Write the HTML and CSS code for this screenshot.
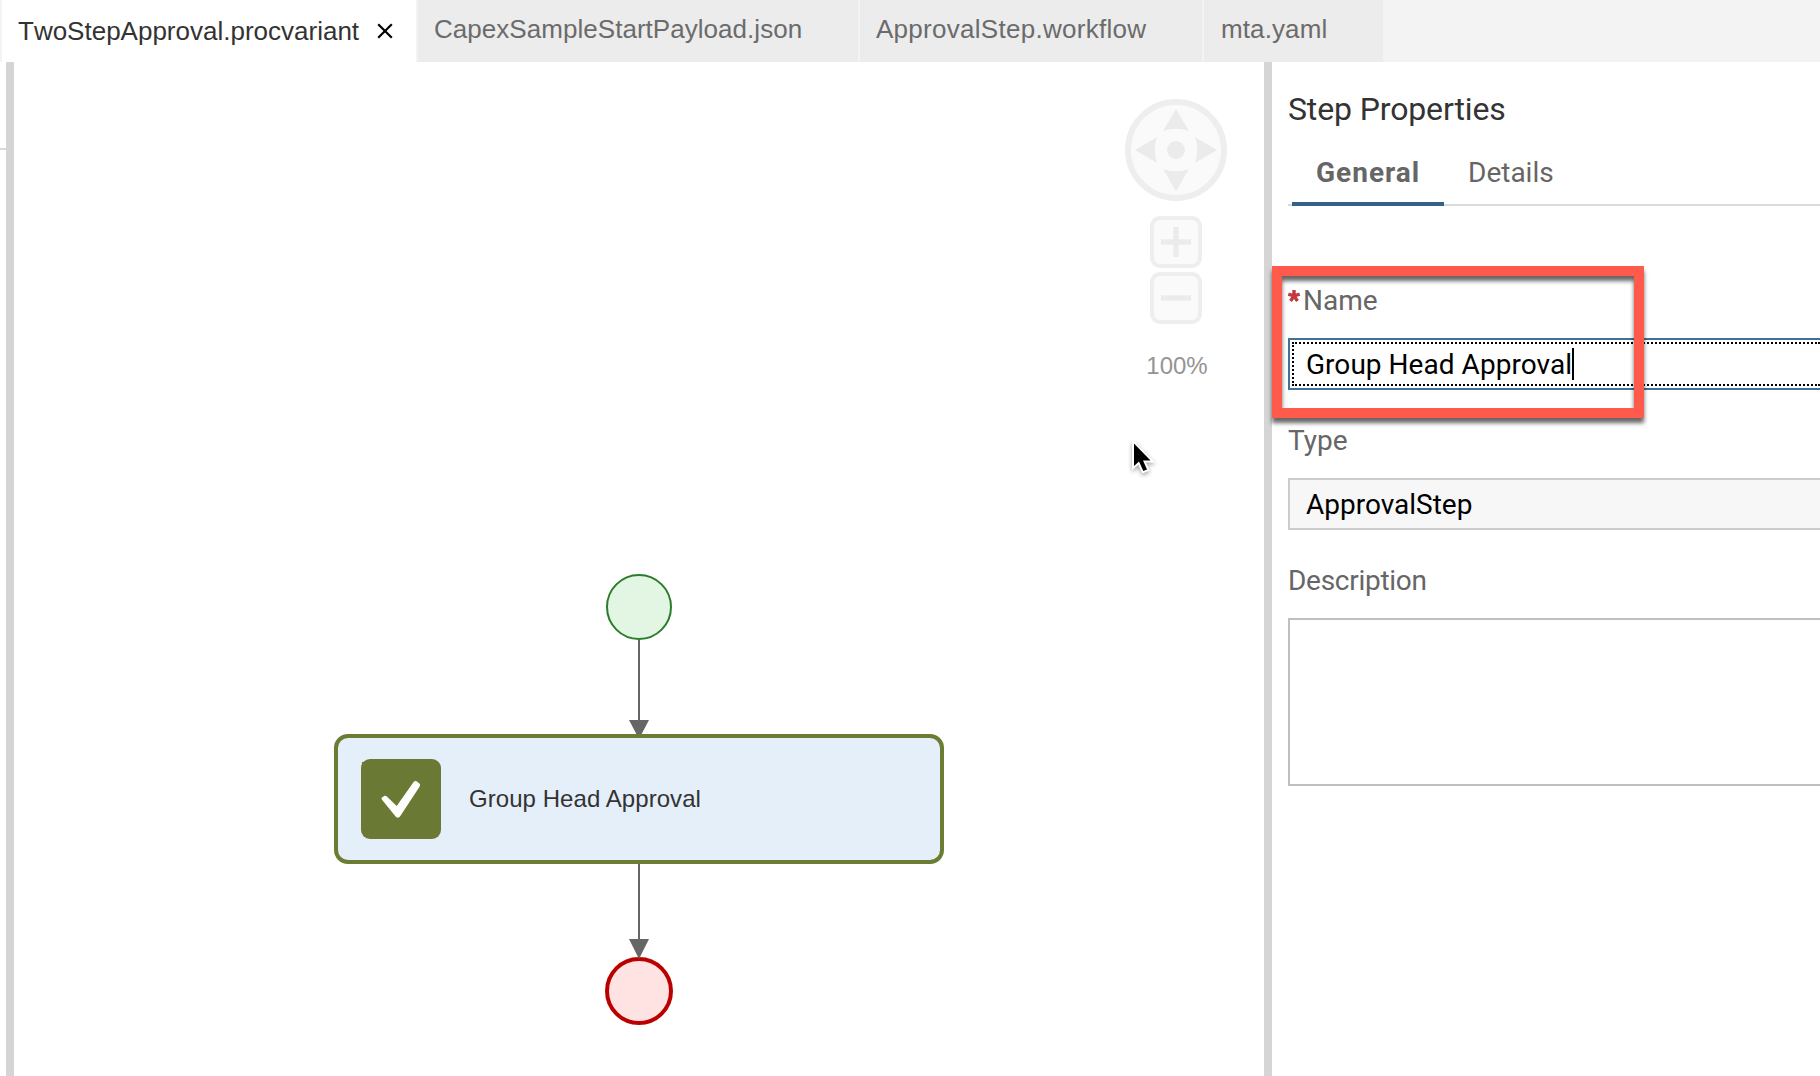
FILE: index.html
```html
<!DOCTYPE html>
<html lang="en">
<head>
<meta charset="utf-8">
<title>TwoStepApproval.procvariant</title>
<link rel="stylesheet" href="styles.css">
</head>
<body>
<nav class="tabbar">
  <div class="tab tab-active"><span>TwoStepApproval.procvariant</span>
    <svg class="close" viewBox="0 0 16 16"><path d="M1.2 1.2 14.8 14.8M14.8 1.2 1.2 14.8"/></svg>
  </div>
  <div class="tab tab-json">CapexSampleStartPayload.json</div>
  <div class="tab tab-workflow">ApprovalStep.workflow</div>
  <div class="tab tab-yaml">mta.yaml</div>
</nav>
<div class="workspace">
  <div class="gutter"></div>
  <div class="splitter"></div>
  <main class="canvas">
    <svg class="flow" width="1250" height="1014" viewBox="14 62 1250 1014">
      <circle class="start" cx="639" cy="607" r="32"/>
      <circle class="end" cx="639" cy="991" r="32"/>
      <path class="edge" d="M639 640V722M639 864V941"/>
      <path class="arrow" d="M629 720H649L639 739ZM629 939H649L639 959Z"/>
    </svg>
    <div class="node">
      <svg class="node-icon" viewBox="0 0 80 80"><rect width="80" height="80" rx="9"/><path class="corner" d="M1 3H6V8H1Z"/><path class="check" d="M20.8 40.6Q20 39.6 21 38.5L23.6 36.8Q24.6 36.4 25.6 37.3L35.7 47 52.6 23Q54 21.3 55.6 22.3L58.4 24.6Q59.6 25.8 58.7 27.4L39 57.4Q36.8 59.8 34.6 57.4Z"/></svg>
      <span>Group Head Approval</span>
    </div>
    <div class="controls">
      <svg class="pan" viewBox="-51 -51 102 102">
        <circle class="ring" r="48"/>
        <path class="shape" d="M0-41 13-19A40 40 0 0 0-13-19ZM0 41 13 19A40 40 0 0 1-13 19ZM-41 0-19-13A40 40 0 0 0-19 13ZM41 0 19-13A40 40 0 0 1 19 13Z"/>
        <circle class="shape" r="9"/>
      </svg>
      <svg class="zoom" viewBox="0 0 52 52"><rect x="2" y="2" width="48" height="48" rx="8"/><path d="M11 26H41M26 11V41"/></svg>
      <svg class="zoom" viewBox="0 0 52 52"><rect x="2" y="2" width="48" height="48" rx="8"/><path d="M11 26H41"/></svg>
      <span class="percent">100%</span>
    </div>
    <svg class="pointer" viewBox="0 0 26 38"><path d="M3 2.5V25L8 20.5 12.3 30 16 28.5 12 19.5H19.5Z"/></svg>
  </main>
  <div class="splitter"></div>
  <aside class="panel">
    <h1>Step Properties</h1>
    <div class="sections"><div class="section selected">General</div><div class="section">Details</div></div>
    <div class="field"><div class="label"><svg class="required" viewBox="-7 -7 14 14"><path d="M0 0V-6M0 0 5.7-1.9M0 0 3.5 4.9M0 0-3.5 4.9M0 0-5.7-1.9"/></svg>Name</div>
      <div class="input focused"><div class="focus"><span>Group Head Approval</span><i class="caret"></i></div></div></div>
    <div class="field"><div class="label">Type</div><div class="input readonly">ApprovalStep</div></div>
    <div class="field"><div class="label label-description">Description</div><div class="textarea"></div></div>
    <div class="highlight"></div>
  </aside>
</div>
</body>
</html>
```
FILE: styles.css
```css
* { box-sizing: border-box; }
body {
  margin: 0;
  width: 1820px;
  height: 1076px;
  overflow: hidden;
  background: #fff;
  font-family: "Liberation Sans", Arial, sans-serif;
  display: flex;
  flex-direction: column;
}
svg { display: block; flex: none; }

.tabbar {
  display: flex;
  gap: 2px;
  height: 62px;
  padding-left: 2px;
  background: #f3f3f3;
  font-size: 26px;
  line-height: 58px;
  font-kerning: none;
}
.tab { background: #ececec; color: #6b6b6b; padding-left: 16px; white-space: nowrap; }
.tab-active {
  display: flex;
  align-items: center;
  gap: 18px;
  width: 414px;
  background: #fff;
  color: #333;
  line-height: 62px;
}
.tab-json { width: 440px; letter-spacing: .04px; }
.tab-workflow { width: 342px; letter-spacing: .28px; }
.tab-yaml { width: 179px; padding-left: 17px; letter-spacing: .1px; }
.close { width: 16px; height: 16px; fill: none; stroke: #000; stroke-width: 2.2; }

.workspace { display: flex; flex: 1; min-height: 0; }
.gutter { width: 6px; height: 88px; border-bottom: 2px solid #d9d9d9; }
.splitter { width: 8px; background: #d5d5d5; }

.canvas { position: relative; width: 1250px; background: #fff; }
.start { fill: #e3f6e3; stroke: #2b7d2b; stroke-width: 2; }
.end { fill: #ffe3e3; stroke: #b00; stroke-width: 4; }
.edge { stroke: #666; stroke-width: 2; }
.arrow { fill: #666; }
.node {
  position: absolute;
  left: 320px;
  top: 672px;
  width: 610px;
  height: 130px;
  display: flex;
  align-items: center;
  gap: 28px;
  padding-left: 23px;
  border: 4px solid #6a7d33;
  border-radius: 14px;
  background: #e5effa;
  color: #333;
  font-size: 24px;
  letter-spacing: .06px;
}
.node-icon { width: 80px; height: 80px; fill: #6a7933; }
.check { fill: #fff; }

.controls {
  position: absolute;
  right: 37px;
  top: 37px;
  width: 102px;
  display: flex;
  flex-direction: column;
  align-items: center;
  gap: 4px;
}
.pan { width: 102px; height: 102px; margin-bottom: 11px; }
.ring { fill: #fafafa; stroke: #eee; stroke-width: 6; }
.shape { fill: #ebebeb; }
.zoom { width: 52px; height: 52px; fill: #fafafa; stroke: #eee; stroke-width: 4; }
.zoom path { stroke: #ebebeb; stroke-width: 5.5; }
.percent { margin-top: 24px; padding-left: 2px; font-size: 24px; line-height: 28px; color: #949494; }
.pointer {
  position: absolute;
  left: 1117px;
  top: 379px;
  width: 26px;
  height: 38px;
  stroke: #fff;
  stroke-width: 4;
  paint-order: stroke;
  filter: drop-shadow(0 2px 2px rgba(0, 0, 0, .35));
}

.panel {
  position: relative;
  flex: 1;
  padding: 22px 0 0 16px;
  font-family: Roboto, sans-serif;
  font-size: 28px;
  color: #666;
}
h1 { margin: 0; font-size: 32px; line-height: 50px; font-weight: 400; letter-spacing: -.13px; color: #333; }
.sections {
  display: flex;
  height: 72px;
  margin-bottom: 76px;
  padding-left: 4px;
  border-bottom: 2px solid #d9d9e0;
}
.section { height: 72px; padding: 20px 24px 0; line-height: 37px; }
.selected { width: 152px; font-weight: 700; letter-spacing: 1px; border-bottom: 4px solid #346187; }
.field { margin-bottom: 32px; }
.label { display: flex; height: 37px; line-height: 37px; margin-bottom: 19px; }
.label-description { letter-spacing: -.28px; }
.required { width: 14px; height: 14px; margin: 7px 2px 0 -1px; stroke: #c0393f; stroke-width: 3.4; }
.input {
  height: 52px;
  border: 2px solid #ccc;
  border-right: 0;
  color: #000;
  line-height: 50px;
}
.focused { border-color: #427099; padding: 2px 0; }
.focus {
  display: flex;
  align-items: center;
  height: 44px;
  margin-left: 2px;
  padding-left: 12px;
  line-height: 42px;
  letter-spacing: .04px;
  border: 2px dotted #000;
  border-right: 0;
}
.focus span { padding-top: 1px; }
.caret { width: 2px; height: 32px; background: #000; }
.readonly { padding-left: 16px; background: #f7f7f7; }
.textarea { height: 168px; border: 2px solid #bfbfbf; border-right: 0; }
.highlight {
  position: absolute;
  left: 0;
  top: 204px;
  width: 372px;
  height: 152px;
  border: 10px solid #ff5a4c;
  filter: drop-shadow(0 5px 2px rgba(0, 0, 0, .6));
}
```
